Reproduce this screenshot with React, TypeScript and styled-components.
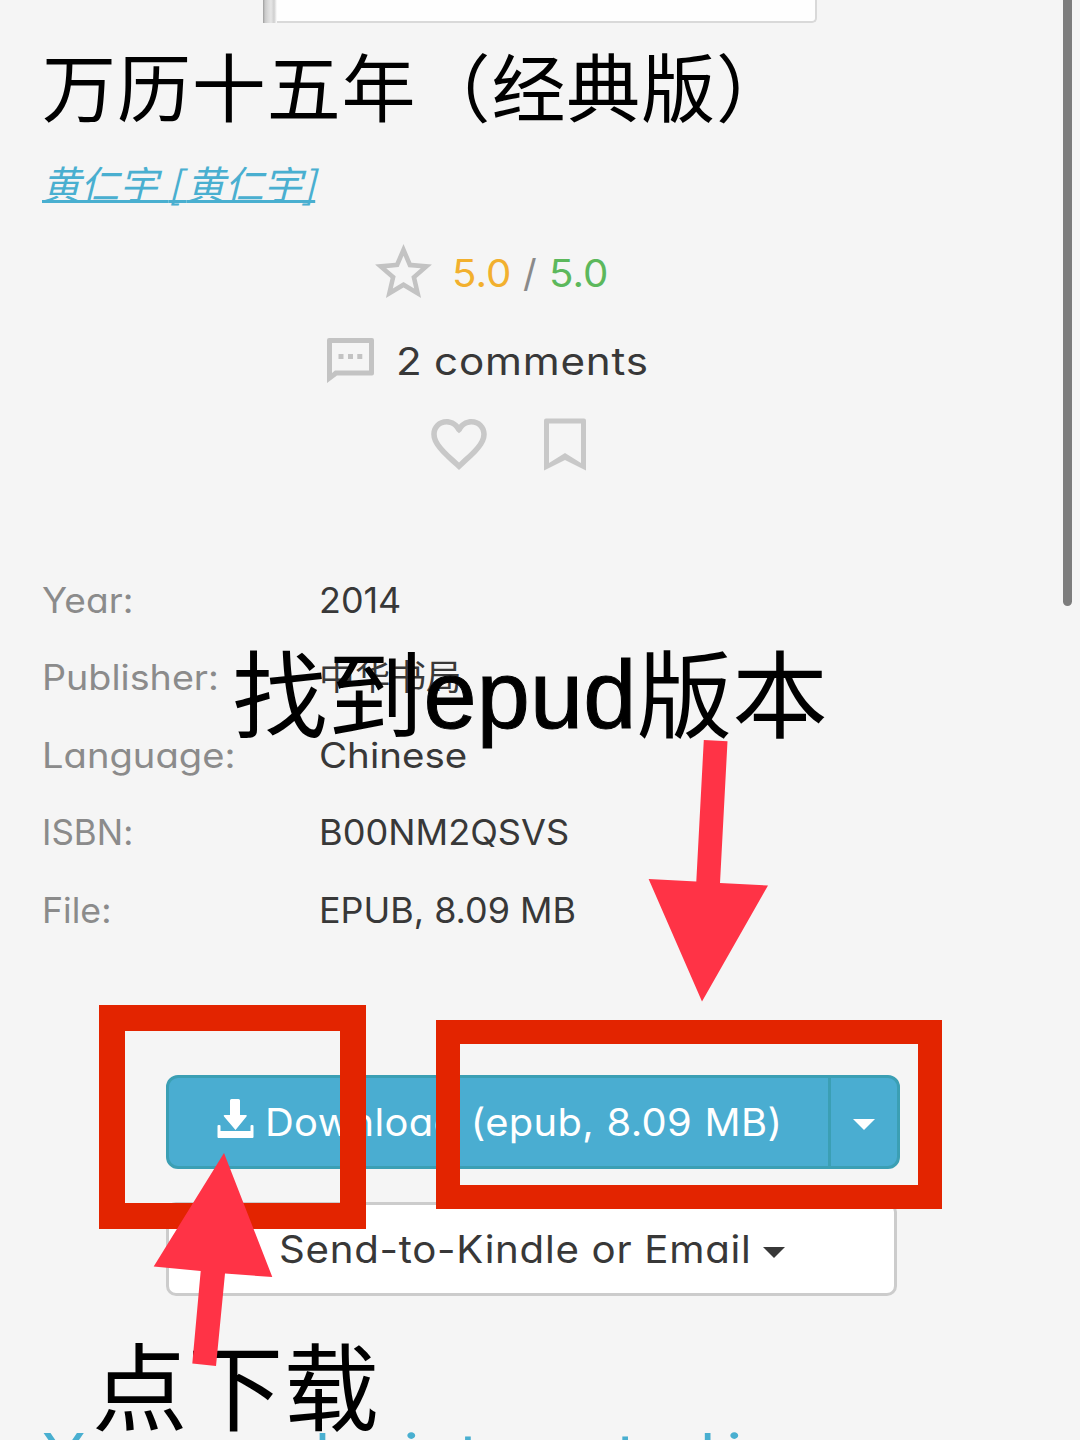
import React from "react";
import styled, { createGlobalStyle } from "styled-components";

const GlobalStyle = createGlobalStyle`
  *, *::before, *::after { box-sizing: border-box; }
  html, body { margin: 0; padding: 0; background: #f5f5f5; overflow: hidden; }
`;

const latin = `Inter, "Noto Sans CJK SC", sans-serif`;
const han = `"Noto Sans CJK SC", sans-serif`;

const Page = styled.main`
  position: relative;
  width: 1080px;
  height: 1440px;
  overflow: hidden;
  background: #f5f5f5;
  color: #383838;
  font-family: ${latin};
  font-feature-settings: "cv11" 1, "calt" 0;
  white-space: nowrap;
`;

const Wide = styled.span<{ $x: number; $ls?: number; $ws?: number }>`
  display: inline-block;
  transform: scaleX(${(p) => p.$x});
  transform-origin: left center;
  letter-spacing: ${(p) => p.$ls ?? 0}px;
  word-spacing: ${(p) => p.$ws ?? 0}px;
`;

const Cover = styled.div`
  display: flex;
  width: 554px;
  height: 23px;
  margin-left: 263px;
  background: #fefefe;
  border: solid #d9d9d9;
  border-width: 0 2px 2px 0;
  border-radius: 0 0 5px 0;
`;

const Spine = styled.div`
  width: 14px;
  height: 23px;
  background: linear-gradient(90deg, #9c9c9c 0, #c9c9c9 2px, #dadada 5px, #e6e6e6 8px, #cfcfcf 11px, #fefefe 14px);
`;

const Title = styled.h1`
  margin: 11px 0 0 42px;
  font: 400 74px/100px ${han};
  letter-spacing: 0.9px;
  color: #000;
`;

const Author = styled.a`
  display: block;
  width: max-content;
  margin: 23px 0 0 42px;
  font: italic 400 38.6px/50px ${han};
  color: #49afd0;
  word-spacing: 2px;
  text-decoration: underline;
  text-decoration-thickness: 2.5px;
  text-underline-offset: 1px;
  text-decoration-skip-ink: none;
`;

const Bracket = styled.span`
  letter-spacing: 5px;
`;

const IconRow = styled.div<{ $top: number; $left: number; $gap: number }>`
  display: flex;
  align-items: center;
  height: 60px;
  margin-top: ${(p) => p.$top}px;
  padding-left: ${(p) => p.$left}px;
  gap: ${(p) => p.$gap}px;
`;

const Score = styled.div`
  display: flex;
  gap: 12px;
  font-size: 38px;
  line-height: 60px;
  padding-top: 3px;
`;

const Value = styled(Wide)<{ $color: string }>`
  color: ${(p) => p.$color};
`;

const Slash = styled.span`
  margin-left: 3px;
  color: #8a8a8a;
`;

const Comments = styled.div`
  font-size: 38px;
`;

const Details = styled.dl`
  margin: 87.2px 0 0 42px;
`;

const Detail = styled.div`
  display: grid;
  grid-template-columns: 277px 1fr;
  height: 77.6px;
  line-height: 77.6px;
  font-size: 35px;
`;

const Term = styled.dt`
  color: #8b8b8b;
`;

const Data = styled.dd`
  margin: 0;
`;

const ButtonGroup = styled.div`
  display: flex;
  width: 734px;
  height: 94px;
  margin: 125.3px 0 0 166px;
  border: 3px solid #3b9fb4;
  border-radius: 12px;
  background: #4aadd1;
  color: #fff;
`;

const DownloadButton = styled.div`
  display: flex;
  align-items: center;
  width: 662px;
  padding-left: 48px;
  gap: 11px;
  border-right: 3px solid #3b9fb4;
  font-size: 38px;
`;

const Toggle = styled.div`
  flex: 1;
  display: flex;
  align-items: center;
  justify-content: center;
  padding-top: 6px;
`;

const Caret = styled.i`
  width: 0;
  height: 0;
  border: solid transparent;
  border-width: 11px 11px 0;
  border-top-color: currentColor;
`;

const SendButton = styled.div`
  display: flex;
  align-items: center;
  width: 731px;
  height: 94px;
  margin: 33.5px 0 0 166px;
  padding-left: 110px;
  gap: 38px;
  border: 3px solid #ccc;
  border-radius: 10px;
  background: #fff;
  font-size: 38px;

  ${Caret} {
    margin-top: 6px;
  }
`;

const Related = styled.h2`
  margin: 129px 0 0 42px;
  font-size: 57px;
  line-height: 60px;
  font-weight: 400;
  color: #49afd0;
`;

const ScrollThumb = styled.div`
  position: absolute;
  top: -10px;
  left: 1063px;
  width: 9px;
  height: 616px;
  border-radius: 5px;
  background: #7d7d7d;
`;

const Note = styled.div<{ $x: number; $y: number }>`
  position: absolute;
  left: ${(p) => p.$x}px;
  top: ${(p) => p.$y}px;
  font: 400 95.5px/120px "Liberation Sans", "Noto Sans CJK SC", sans-serif;
  letter-spacing: 0.2px;
  color: #000;
`;

const NoteLatin = styled.span`
  line-height: 0;
  vertical-align: 3px;
  -webkit-text-stroke: 1px #000;
`;

const Frame = styled.div<{ $x: number; $y: number; $w: number; $h: number; $b: number }>`
  position: absolute;
  left: ${(p) => p.$x}px;
  top: ${(p) => p.$y}px;
  width: ${(p) => p.$w}px;
  height: ${(p) => p.$h}px;
  border: ${(p) => p.$b}px solid #e32400;
`;

const Arrow = styled.svg<{ $x: number; $y: number }>`
  position: absolute;
  left: ${(p) => p.$x}px;
  top: ${(p) => p.$y}px;
  fill: #ff3346;
`;

const details = [
  { term: "Year:", tx: 1.06, data: "2014", dx: 1.025 },
  { term: "Publisher:", tx: 1.077, data: "中华书局", dx: 1.02 },
  { term: "Language:", tx: 1.09, data: "Chinese", dx: 1.1 },
  { term: "ISBN:", tx: 1, data: "B00NM2QSVS", dx: 1.033 },
  { term: "File:", tx: 1.02, data: "EPUB, 8.09 MB", dx: 1.026 },
];

const StarIcon = () => (
  <svg width="57" height="54" viewBox="2 2 20 19" fill="#c3c3c3">
    <path d="M22 9.24l-7.19-.62L12 2 9.19 8.63 2 9.24l5.46 4.73L5.82 21 12 17.27 18.18 21l-1.63-7.03L22 9.24zM12 15.4l-3.76 2.27 1-4.28-3.32-2.88 4.38-.38L12 6.1l1.71 4.04 4.38.38-3.32 2.88 1 4.28L12 15.4z" />
  </svg>
);

const CommentIcon = () => (
  <svg width="47" height="46" viewBox="0 0 47 46" fill="#c3c3c3">
    <path fillRule="evenodd" d="M2 0H45Q47 0 47 2V35.5Q47 37.5 45 37.5H10L0 45V2Q0 0 2 0ZM5 5V35L8 32.5H42V5Z" />
    <path d="M11.5 16h5v5h-5zM21 16h5v5h-5zM30.3 16h5v5h-5z" />
  </svg>
);

const HeartIcon = () => (
  <svg width="56" height="51" viewBox="2 3 20 18.35" fill="#c8c8c8">
    <path d="M16.5 3c-1.74 0-3.41.81-4.5 2.09C10.91 3.81 9.24 3 7.5 3 4.42 3 2 5.42 2 8.5c0 3.78 3.4 6.86 8.55 11.54L12 21.35l1.45-1.32C18.6 15.36 22 12.28 22 8.5 22 5.42 19.58 3 16.5 3zm-4.4 15.55l-.1.1-.1-.1C7.14 14.24 4 11.39 4 8.5 4 6.5 5.5 5 7.5 5c1.54 0 3.04.99 3.57 2.36L12 8.1l.94-.74C13.46 5.99 14.96 5 16.5 5c2 0 3.5 1.5 3.5 3.5 0 2.89-3.14 5.74-7.9 10.05z" />
  </svg>
);

const BookmarkIcon = () => (
  <svg width="42" height="53" viewBox="0 0 42 53" fill="#c8c8c8">
    <path fillRule="evenodd" d="M2 0.5H40Q42 0.5 42 2.5V52.5L21 42L0 52.5V2.5Q0 0.5 2 0.5ZM5 5.5V45L21 35L37 45V5.5Z" />
  </svg>
);

const DownloadIcon = () => (
  <svg width="37" height="45" viewBox="0 0 37 45" fill="#fff">
    <path d="M14.5 0h7q1.5 0 1.5 1.5V16h6q1.5 0 .5 1.5L18.5 31 7 17.5Q6 16 7.5 16H13V1.5Q13 0 14.5 0z" />
    <path d="M1.5 26H2.5Q3.5 26 3.5 27V32H33.5V27Q33.5 26 34.5 26H35.5Q36.5 26 36.5 27V38Q36.5 39 35.5 39H1.5Q.5 39 .5 38V27Q.5 26 1.5 26Z" />
  </svg>
);

export default function App() {
  return (
    <Page>
      <GlobalStyle />
      <Cover>
        <Spine />
      </Cover>
      <Title>万历十五年（经典版）</Title>
      <Author>
        黄仁宇 <Bracket>[</Bracket>黄仁宇]
      </Author>

      <IconRow $top={34} $left={375} $gap={20}>
        <StarIcon />
        <Score>
          <Value $x={1.06} $color="#f2b02e">5.0</Value>
          <Slash>/</Slash>
          <Value $x={1.06} $color="#5cb85c">5.0</Value>
        </Score>
      </IconRow>
      <IconRow $top={29.500} $left={327} $gap={22}>
        <CommentIcon />
        <Comments>
          <Wide $x={1.11} $ls={0.7} $ws={-1}>2 comments</Wide>
        </Comments>
      </IconRow>
      <IconRow $top={24} $left={431} $gap={57}>
        <HeartIcon />
        <BookmarkIcon />
      </IconRow>

      <Details>
        {details.map((d) => (
          <Detail key={d.term}>
            <Term>
              <Wide $x={d.tx}>{d.term}</Wide>
            </Term>
            <Data>
              <Wide $x={d.dx}>{d.data}</Wide>
            </Data>
          </Detail>
        ))}
      </Details>

      <ButtonGroup>
        <DownloadButton>
          <DownloadIcon />
          <Wide $x={1.05} $ls={0.3} $ws={1}>Download (epub, 8.09 MB)</Wide>
        </DownloadButton>
        <Toggle>
          <Caret />
        </Toggle>
      </ButtonGroup>
      <SendButton>
        <Wide $x={1.06} $ls={0.65}>Send-to-Kindle or Email</Wide>
        <Caret />
      </SendButton>
      <Related>
        <Wide $x={1.122} $ls={1} $ws={-8}>You may be interested in</Wide>
      </Related>

      <ScrollThumb />
      <Frame $x={99} $y={1005} $w={267} $h={224} $b={26} />
      <Frame $x={436} $y={1020} $w={506} $h={189} $b={24} />
      <Note $x={232} $y={638}>
        找到<NoteLatin>epud</NoteLatin>版本
      </Note>
      <Note $x={92} $y={1331}>点下载</Note>
      <Arrow $x={648} $y={740} width="121" height="262" viewBox="648 740 121 262">
        <path d="M703.8 740L727.5 741.3 720 883 768 885.5 702 1001.5 648.6 879 696.3 881.5Z" />
      </Arrow>
      <Arrow $x={153} $y={1153} width="120" height="214" viewBox="153 1153 120 214">
        <path d="M224 1153L272.3 1277 225 1273.5 216 1366 192.3 1363.5 200.7 1271 153.7 1266.5Z" />
      </Arrow>
    </Page>
  );
}
